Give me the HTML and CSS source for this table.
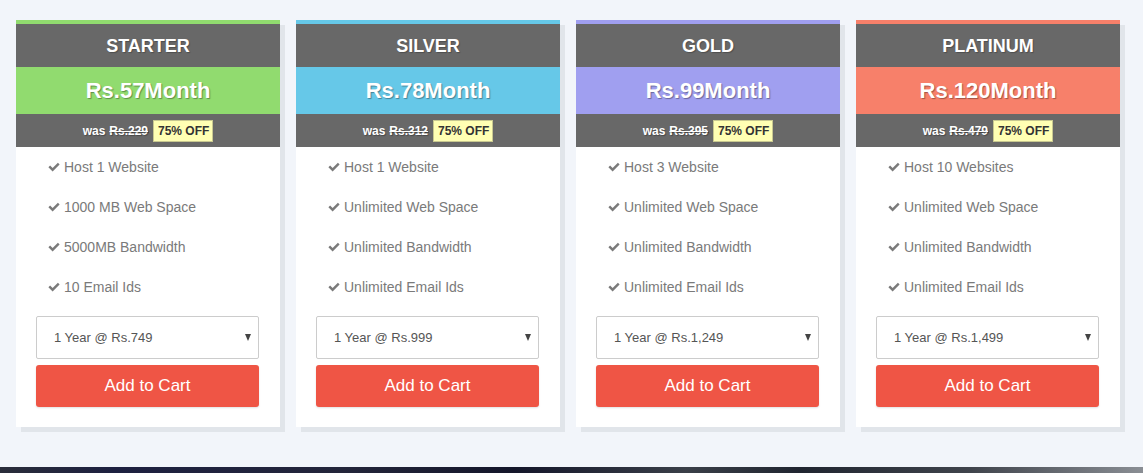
FILE: index.html
```html
<!DOCTYPE html>
<html lang="en">
<head>
<meta charset="utf-8">
<title>Pricing</title>
<link rel="stylesheet" href="styles.css">
</head>
<body>
<section class="pricing">
  <div class="plans">
    <div class="plan plan-green">
      <div class="plan-name">STARTER</div>
      <div class="plan-price">Rs.57Month</div>
      <div class="plan-was">was <s>Rs.229</s> <span class="off">75% OFF</span></div>
      <div class="plan-body">
        <ul class="features">
          <li><svg class="check" viewBox="0 0 12 10"><path d="M0.4 5.2 L2.1 3.5 L4.6 6 L9.9 0.7 L11.6 2.4 L4.6 9.4 Z"/></svg>Host 1 Website</li>
          <li><svg class="check" viewBox="0 0 12 10"><path d="M0.4 5.2 L2.1 3.5 L4.6 6 L9.9 0.7 L11.6 2.4 L4.6 9.4 Z"/></svg>1000 MB Web Space</li>
          <li><svg class="check" viewBox="0 0 12 10"><path d="M0.4 5.2 L2.1 3.5 L4.6 6 L9.9 0.7 L11.6 2.4 L4.6 9.4 Z"/></svg>5000MB Bandwidth</li>
          <li><svg class="check" viewBox="0 0 12 10"><path d="M0.4 5.2 L2.1 3.5 L4.6 6 L9.9 0.7 L11.6 2.4 L4.6 9.4 Z"/></svg>10 Email Ids</li>
        </ul>
        <div class="select-wrap"><select class="term"><option>1 Year @ Rs.749</option></select></div>
        <button class="cart">Add to Cart</button>
      </div>
    </div>
    <div class="plan plan-blue">
      <div class="plan-name">SILVER</div>
      <div class="plan-price">Rs.78Month</div>
      <div class="plan-was">was <s>Rs.312</s> <span class="off">75% OFF</span></div>
      <div class="plan-body">
        <ul class="features">
          <li><svg class="check" viewBox="0 0 12 10"><path d="M0.4 5.2 L2.1 3.5 L4.6 6 L9.9 0.7 L11.6 2.4 L4.6 9.4 Z"/></svg>Host 1 Website</li>
          <li><svg class="check" viewBox="0 0 12 10"><path d="M0.4 5.2 L2.1 3.5 L4.6 6 L9.9 0.7 L11.6 2.4 L4.6 9.4 Z"/></svg>Unlimited Web Space</li>
          <li><svg class="check" viewBox="0 0 12 10"><path d="M0.4 5.2 L2.1 3.5 L4.6 6 L9.9 0.7 L11.6 2.4 L4.6 9.4 Z"/></svg>Unlimited Bandwidth</li>
          <li><svg class="check" viewBox="0 0 12 10"><path d="M0.4 5.2 L2.1 3.5 L4.6 6 L9.9 0.7 L11.6 2.4 L4.6 9.4 Z"/></svg>Unlimited Email Ids</li>
        </ul>
        <div class="select-wrap"><select class="term"><option>1 Year @ Rs.999</option></select></div>
        <button class="cart">Add to Cart</button>
      </div>
    </div>
    <div class="plan plan-purple">
      <div class="plan-name">GOLD</div>
      <div class="plan-price">Rs.99Month</div>
      <div class="plan-was">was <s>Rs.395</s> <span class="off">75% OFF</span></div>
      <div class="plan-body">
        <ul class="features">
          <li><svg class="check" viewBox="0 0 12 10"><path d="M0.4 5.2 L2.1 3.5 L4.6 6 L9.9 0.7 L11.6 2.4 L4.6 9.4 Z"/></svg>Host 3 Website</li>
          <li><svg class="check" viewBox="0 0 12 10"><path d="M0.4 5.2 L2.1 3.5 L4.6 6 L9.9 0.7 L11.6 2.4 L4.6 9.4 Z"/></svg>Unlimited Web Space</li>
          <li><svg class="check" viewBox="0 0 12 10"><path d="M0.4 5.2 L2.1 3.5 L4.6 6 L9.9 0.7 L11.6 2.4 L4.6 9.4 Z"/></svg>Unlimited Bandwidth</li>
          <li><svg class="check" viewBox="0 0 12 10"><path d="M0.4 5.2 L2.1 3.5 L4.6 6 L9.9 0.7 L11.6 2.4 L4.6 9.4 Z"/></svg>Unlimited Email Ids</li>
        </ul>
        <div class="select-wrap"><select class="term"><option>1 Year @ Rs.1,249</option></select></div>
        <button class="cart">Add to Cart</button>
      </div>
    </div>
    <div class="plan plan-red">
      <div class="plan-name">PLATINUM</div>
      <div class="plan-price">Rs.120Month</div>
      <div class="plan-was">was <s>Rs.479</s> <span class="off">75% OFF</span></div>
      <div class="plan-body">
        <ul class="features">
          <li><svg class="check" viewBox="0 0 12 10"><path d="M0.4 5.2 L2.1 3.5 L4.6 6 L9.9 0.7 L11.6 2.4 L4.6 9.4 Z"/></svg>Host 10 Websites</li>
          <li><svg class="check" viewBox="0 0 12 10"><path d="M0.4 5.2 L2.1 3.5 L4.6 6 L9.9 0.7 L11.6 2.4 L4.6 9.4 Z"/></svg>Unlimited Web Space</li>
          <li><svg class="check" viewBox="0 0 12 10"><path d="M0.4 5.2 L2.1 3.5 L4.6 6 L9.9 0.7 L11.6 2.4 L4.6 9.4 Z"/></svg>Unlimited Bandwidth</li>
          <li><svg class="check" viewBox="0 0 12 10"><path d="M0.4 5.2 L2.1 3.5 L4.6 6 L9.9 0.7 L11.6 2.4 L4.6 9.4 Z"/></svg>Unlimited Email Ids</li>
        </ul>
        <div class="select-wrap"><select class="term"><option>1 Year @ Rs.1,499</option></select></div>
        <button class="cart">Add to Cart</button>
      </div>
    </div>
  </div>
</section>
<div class="photo-strip"></div>
</body>
</html>
```

FILE: styles.css
```css
* { box-sizing: border-box; }
html, body { margin: 0; padding: 0; }
body {
  background: #f2f5fa;
  font-family: "Liberation Sans", Arial, sans-serif;
  overflow: hidden;
}
.pricing {
  padding: 20px 0 40px 16px;
}
.plans {
  display: flex;
  gap: 16px;
}
.plan {
  width: 264px;
  background: #fff;
  border-top: 4px solid #91db6f;
  box-shadow: 5px 5px 0 #e1e5ea;
}
.plan-name {
  height: 43px;
  padding-top: 1px;
  background: #686868;
  color: #fff;
  font-weight: bold;
  font-size: 18px;
  display: flex;
  align-items: center;
  justify-content: center;
  text-shadow: 1px 1px 1px rgba(0,0,0,0.25);
}
.plan-price {
  height: 47px;
  color: #fff;
  font-weight: bold;
  font-size: 22px;
  display: flex;
  align-items: center;
  justify-content: center;
  text-shadow: 1px 1px 1px rgba(0,0,0,0.35);
}
.plan-was {
  height: 33px;
  background: #686868;
  color: #fff;
  font-weight: bold;
  font-size: 12px;
  display: flex;
  align-items: center;
  justify-content: center;
  gap: 4px;
  text-shadow: 1px 1px 1px rgba(0,0,0,0.3);
}
.plan-was s { margin-right: 1px; }
.off {
  background: #ffffb3;
  border: 1px solid #c8c890;
  color: #333;
  padding: 3px 3px 3px 4px;
  text-shadow: none;
}
.plan-green { border-top-color: #91db6f; }
.plan-green .plan-price { background: #91db6f; }
.plan-blue { border-top-color: #66c8e8; }
.plan-blue .plan-price { background: #66c8e8; }
.plan-purple { border-top-color: #a09ff0; }
.plan-purple .plan-price { background: #a09ff0; }
.plan-red { border-top-color: #f7806a; }
.plan-red .plan-price { background: #f7806a; }

.plan-body {
  padding: 0 21px 20px 20px;
}
.features {
  list-style: none;
  margin: 0;
  padding: 0 0 0 12px;
}
.features li {
  height: 40px;
  display: flex;
  align-items: center;
  font-size: 14px;
  color: #7a7a7a;
}
.check {
  width: 12px;
  height: 10px;
  fill: #7a7a7a;
  margin-right: 4px;
  flex: none;
}
.select-wrap {
  position: relative;
  margin-top: 9px;
}
.select-wrap::after {
  content: "";
  position: absolute;
  right: 8px;
  top: 18px;
  border-left: 3.5px solid transparent;
  border-right: 3.5px solid transparent;
  border-top: 7px solid #444;
  pointer-events: none;
}
.term {
  width: 223px;
  height: 43px;
  appearance: none;
  -webkit-appearance: none;
  background: #fff;
  border: 1px solid #ccc;
  border-radius: 2px;
  padding: 0 0 0 17px;
  font-family: "Liberation Sans", Arial, sans-serif;
  font-size: 13px;
  color: #555;
  display: block;
}
.cart {
  display: block;
  width: 223px;
  height: 42px;
  margin-top: 6px;
  background: #ef5545;
  border: none;
  border-radius: 3px;
  color: #fff;
  font-family: "Liberation Sans", Arial, sans-serif;
  font-size: 17px;
  box-shadow: 0 1px 2px rgba(0,0,0,0.12);
}
.photo-strip {
  height: 10px;
  background: linear-gradient(90deg, #2a2d3a 0%, #1d2040 10%, #23253a 30%, #14162a 45%, #3a3f48 60%, #202530 70%, #40444c 85%, #8a8e94 100%);
}
```
